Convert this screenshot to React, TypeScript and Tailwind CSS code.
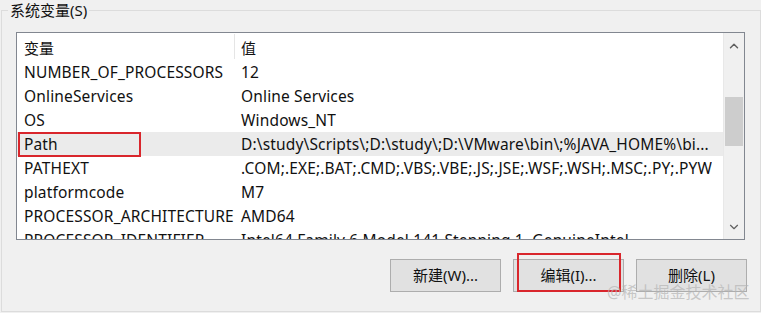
import { ChevronUp, ChevronDown } from 'lucide-react'

const rows = [
  { name: 'NUMBER_OF_PROCESSORS', value: '12' },
  { name: 'OnlineServices', value: 'Online Services' },
  { name: 'OS', value: 'Windows_NT' },
  { name: 'Path', value: 'D:\\study\\Scripts\\;D:\\study\\;D:\\VMware\\bin\\;%JAVA_HOME%\\bi...', selected: true },
  { name: 'PATHEXT', value: '.COM;.EXE;.BAT;.CMD;.VBS;.VBE;.JS;.JSE;.WSF;.WSH;.MSC;.PY;.PYW' },
  { name: 'platformcode', value: 'M7' },
  { name: 'PROCESSOR_ARCHITECTURE', value: 'AMD64' },
  { name: 'PROCESSOR_IDENTIFIER', value: 'Intel64 Family 6 Model 141 Stepping 1, GenuineIntel' },
]

const font = { fontFamily: '"Noto Sans", "Noto Sans CJK SC", sans-serif' }

export default function App() {
  return (
    <div className="relative w-[761px] h-[313px] overflow-hidden bg-[#f0f0f0] text-[15px] text-[#111]" style={font}>
      {/* Group box */}
      <div className="relative mt-[10px] ml-[1px] w-[760px] h-[302px] border border-[#dcdcdc]">
        <span className="absolute left-[6px] top-[-11px] bg-[#f0f0f0] px-[2px] leading-[20px]">系统变量(S)</span>

        {/* List view */}
        <div className="ml-[14px] mt-[21px] w-[729px] h-[208px] border border-[#828790] bg-white flex overflow-hidden">
          <div className="flex-1 min-w-0 text-[15.5px] tracking-[0.15px]">
            {/* Header */}
            <div className="flex h-[27px] items-center text-[15px] tracking-normal">
              <div className="w-[217px] pl-[7px] pt-[3px] h-full flex items-center">变量</div>
              <div className="w-px h-[25px] bg-[#e5e5e5]" />
              <div className="pl-[6px] pt-[3px]">值</div>
            </div>
            {rows.map((r) => (
              <div
                key={r.name}
                className={`flex h-[24px] items-center whitespace-nowrap ${r.selected ? 'bg-[#ebebeb]' : ''}`}
              >
                <div className="w-[217px] pl-[7px] pt-[1px] shrink-0">{r.name}</div>
                <div className="pl-[7px] pt-[1px] overflow-hidden">{r.value}</div>
              </div>
            ))}
          </div>

          {/* Scrollbar */}
          <div className="w-[21px] shrink-0 bg-[#f0f0f0] border-l border-[#e8e8e8] flex flex-col items-center">
            <div className="h-[24px] flex items-center justify-center mt-[1px]">
              <ChevronUp size={14} strokeWidth={2.5} className="text-[#606060]" />
            </div>
            <div className="mt-[39px] w-[18px] h-[49px] bg-[#cdcdcd]" />
            <div className="flex-1" />
            <div className="h-[22px] flex items-center justify-center mb-[1px]">
              <ChevronDown size={14} strokeWidth={2} className="text-[#606060]" />
            </div>
          </div>
        </div>

        {/* Buttons */}
        <div className="flex gap-[12px] ml-[388px] mt-[19px]">
          {['新建(W)...', '编辑(I)...', '删除(L)'].map((b) => (
            <div
              key={b}
              className="w-[111px] h-[33px] flex items-center justify-center bg-[#e1e1e1] border border-[#adadad]"
            >
              {b}
            </div>
          ))}
        </div>
      </div>

      {/* Annotations */}
      <div className="absolute left-[18px] top-[132px] w-[123px] h-[25px] border-2 border-[#d9262c]" />
      <div className="absolute left-[517px] top-[253px] w-[104px] h-[39px] border-2 border-[#d9262c]" />
      <div className="absolute left-[607px] top-[282px] text-[16px] leading-[20px] text-[#b4b4b4]/70 whitespace-nowrap">
        @稀土掘金技术社区
      </div>
    </div>
  )
}
